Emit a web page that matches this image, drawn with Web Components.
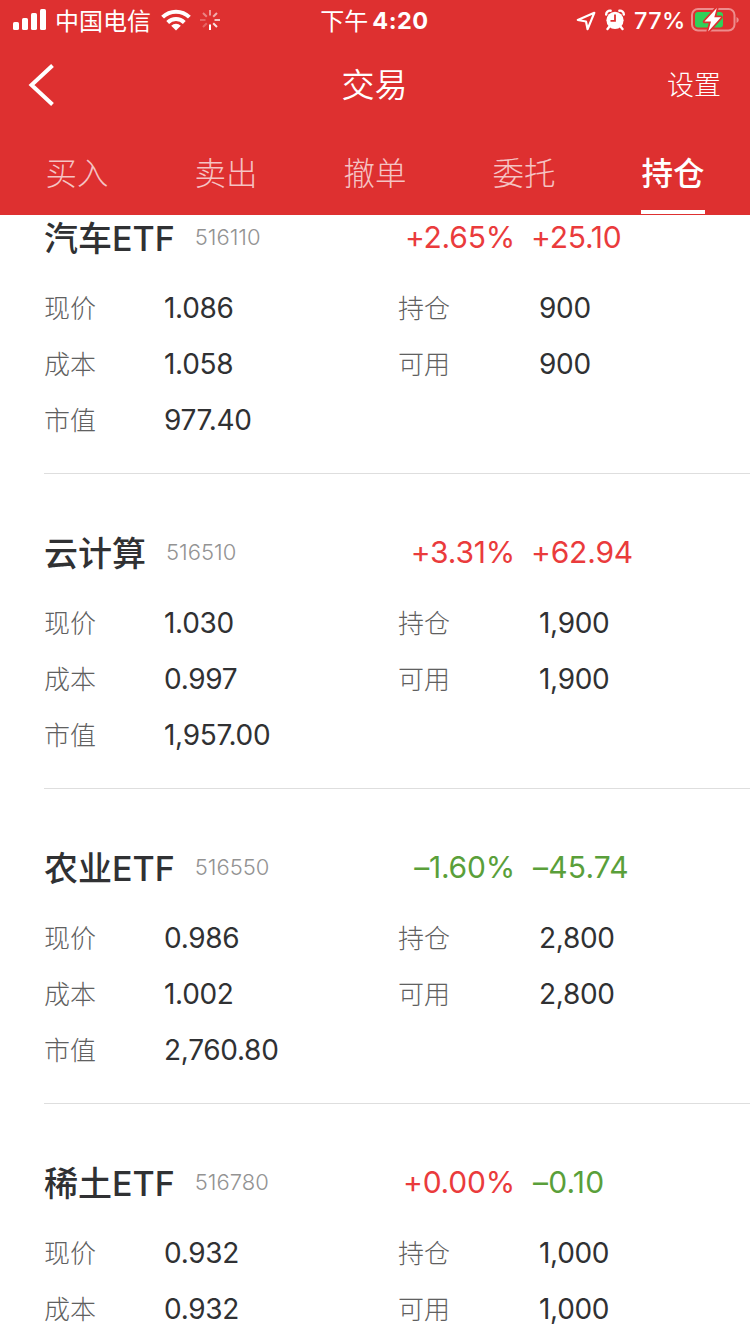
<!DOCTYPE html>
<html lang="zh-CN">
<head>
<meta charset="utf-8">
<title>交易</title>
<style>
  html, body {
    margin: 0;
    height: 100%;
  }
  body {
    background: #fff;
    overflow: hidden;
    font-family: Inter, "Noto Sans CJK SC", sans-serif;
    --color-brand: #de3030;
    --color-text: #303133;
    --color-label: #606060;
    --color-muted: #939393;
    --color-line: #dedede;
    --color-up: #ea3b3c;
    --color-down: #5a9f3a;
  }
</style>
</head>
<body>
<trade-page></trade-page>

<script>
class StatusBar extends HTMLElement {
  constructor() {
    super();
    const shadow = this.attachShadow({ mode: 'open' });
    shadow.innerHTML = `
      <style>
        :host {
          display: grid;
          grid-template-columns: 1fr auto 1fr;
          align-items: center;
          height: 40px;
          padding: 0 11px 0 13px;
          box-sizing: border-box;
          color: #fff;
          font-size: 24px;
          line-height: 42px;
          white-space: nowrap;
        }
        div {
          display: flex;
          align-items: center;
          height: 40px;
        }
        svg {
          display: block;
          flex: none;
        }
        .carrier {
          margin: 0 10px 0 8px;
          padding-top: 3px;
          font-weight: 400;
        }
        .wifi { margin-right: 8px; }
        .time {
          padding-right: 3px;
        }
        .time span { padding-top: 3px; }
        .time b {
          padding-top: 2px;
          font-size: 23.5px;
          font-weight: 700;
          letter-spacing: 0.5px;
          margin-left: 4px;
        }
        .right { justify-content: flex-end; }
        .alarm { margin: 0 9px; }
        .battery-text {
          padding-top: 2px;
          font-size: 23.5px;
          font-weight: 500;
          width: 57px;
          letter-spacing: 0.3px;
        }
      </style>
      <div>
        <svg width="34" height="40" viewBox="0 0 34 40" fill="#fff">
          <rect x="0" y="22" width="6" height="8" rx="1.6"/>
          <rect x="9" y="18" width="6" height="12" rx="1.6"/>
          <rect x="18" y="13" width="6" height="17" rx="1.6"/>
          <rect x="27" y="9" width="6" height="21" rx="1.6"/>
        </svg>
        <span class="carrier">中国电信</span>
        <svg class="wifi" width="30" height="40" viewBox="0 0 30 40">
          <g fill="none" stroke="#fff" stroke-width="4">
            <path d="M1.6 17.2a19 19 0 0 1 26.8 0"/>
            <path d="M6.7 22.5a11.8 11.8 0 0 1 16.6 0"/>
          </g>
          <path fill="#fff" d="M15 30.5l-4.8-4.8a6.800 6.800 0 0 1 9.600 0z"/>
        </svg>
        <svg width="22" height="40" viewBox="-11 -20 22 40" stroke="#fff" stroke-width="2">
          <path d="M0 4.500v5.500"/>
          <path d="M3.200 3.200l3.800 3.800" opacity=".85"/>
          <path d="M4.500 0h5.500" opacity=".7"/>
          <path d="M3.200-3.200l3.800-3.800" opacity=".6"/>
          <path d="M0-4.500v-5.500" opacity=".5"/>
          <path d="M-3.200-3.200l-3.800-3.800" opacity=".4"/>
          <path d="M-4.500 0h-5.500" opacity=".25"/>
          <path d="M-3.200 3.200l-3.800 3.800" opacity=".25"/>
        </svg>
      </div>
      <div class="time"><span>下午</span><b>4:20</b></div>
      <div class="right">
        <svg width="20" height="40" viewBox="0 0 20 40">
          <path d="M1.800 20L18.300 12.800 11.600 29.200 10 21.500z" fill="none" stroke="#fff" stroke-width="2.200" stroke-linejoin="round"/>
        </svg>
        <svg class="alarm" width="20" height="40" viewBox="0 0 20 40">
          <circle cx="10" cy="20.300" r="8.600" fill="#fff"/>
          <path d="M1.200 14.600a3.800 3.800 0 0 1 4.400-3.900M18.800 14.600a3.800 3.800 0 0 0-4.400-3.900M4.500 26.500L2.500 29M15.500 26.500l2 2.500" fill="none" stroke="#fff" stroke-width="2.400" stroke-linecap="round"/>
          <path d="M10 14.500v6.300H5.500" fill="none" stroke="#de3030" stroke-width="1.800"/>
        </svg>
        <span class="battery-text">77%</span>
        <svg width="48" height="40" viewBox="0 0 48 40">
          <rect x="1" y="9" width="42.500" height="21.500" rx="6" fill="none" stroke="#fff" stroke-opacity=".45" stroke-width="2"/>
          <path d="M45.500 17v6q2.300-.8 2.300-3t-2.300-3" fill="#fff" fill-opacity=".45"/>
          <rect x="4" y="12" width="28" height="15.500" rx="3" fill="#30d158"/>
          <path d="M25.800 8L13.500 21.600h6.500L17.200 31.400 30 17.300h-6.700z" fill="#fff" stroke="#de3030" stroke-width="3.500" paint-order="stroke" stroke-linejoin="round"/>
        </svg>
      </div>
    `;
  }
}
customElements.define('status-bar', StatusBar);

class NavBar extends HTMLElement {
  constructor() {
    super();
    const shadow = this.attachShadow({ mode: 'open' });
    shadow.innerHTML = `
      <style>
        :host {
          display: grid;
          grid-template-columns: 1fr auto 1fr;
          align-items: center;
          height: 88px;
          padding: 0 29px 0 28px;
          color: #fff;
          font-size: 33px;
          font-weight: 350;
          line-height: 48px;
        }
        svg { display: block; }
        .title { padding-top: 1px; }
        .action {
          justify-self: end;
          padding-top: 4px;
          font-size: 27px;
          font-weight: 300;
        }
      </style>
      <svg width="28" height="44" viewBox="0 0 28 44">
        <path d="M24.500 3.500L3.500 23 24.500 42.500" fill="none" stroke="#fff" stroke-width="4"/>
      </svg>
      <span class="title"><slot></slot></span>
      <span class="action"><slot name="action"></slot></span>
    `;
  }
}
customElements.define('nav-bar', NavBar);

class TradeTab extends HTMLElement {
  constructor() {
    super();
    const shadow = this.attachShadow({ mode: 'open' });
    shadow.innerHTML = `
      <style>
        :host {
          display: block;
          width: 64px;
          height: 86px;
          box-sizing: border-box;
          border-bottom: 4px solid transparent;
          font-size: 31.500px;
          font-weight: 300;
          line-height: 92px;
          text-align: center;
          white-space: nowrap;
          color: rgba(255, 255, 255, 0.72);
        }
        :host([active]) {
          font-weight: 500;
          color: #fff;
          border-bottom-color: #fff;
        }
      </style>
      <slot></slot>
    `;
  }
}
customElements.define('trade-tab', TradeTab);

class HoldingField extends HTMLElement {
  constructor() {
    super();
    const shadow = this.attachShadow({ mode: 'open' });
    shadow.innerHTML = `
      <style>
        :host {
          display: flex;
          height: 56px;
          line-height: 56px;
        }
        .label {
          width: var(--label-width, 120px);
          padding-top: 1px;
          font-size: 26px;
          font-weight: 300;
          color: var(--color-label);
        }
        .value {
          font-size: 28px;
          letter-spacing: -0.3px;
          color: var(--color-text);
        }
      </style>
      <span class="label"></span>
      <span class="value"><slot></slot></span>
    `;
    this._label = shadow.querySelector('.label');
  }

  connectedCallback() {
    this._label.textContent = this.getAttribute('label');
  }
}
customElements.define('holding-field', HoldingField);

class HoldingCard extends HTMLElement {
  constructor() {
    super();
    this.attachShadow({ mode: 'open' });
  }

  connectedCallback() {
    const get = (name) => this.getAttribute(name);
    const tone = (value) => (value.startsWith('+') ? 'up' : 'down');
    this.shadowRoot.innerHTML = `
      <style>
        :host {
          display: block;
          height: 315px;
          margin-left: 44px;
          padding-top: 43px;
          box-sizing: border-box;
          border-bottom: 1px solid var(--color-line);
        }
        .head {
          display: flex;
          height: 78px;
          line-height: 70px;
          white-space: nowrap;
        }
        .title {
          display: flex;
          gap: 20px;
          width: 350px;
        }
        .name {
          padding-top: 2px;
          font-size: 34px;
          font-weight: 500;
          color: var(--color-text);
        }
        .code {
          font-size: 22px;
          font-weight: 300;
          color: var(--color-muted);
        }
        .rate {
          width: 121px;
          text-align: right;
        }
        .amount { margin-left: 16px; }
        .rate, .amount {
          font-size: 30px;
          font-weight: 400;
          letter-spacing: -0.2px;
        }
        .up { color: var(--color-up); }
        .down { color: var(--color-down); }
        .amount.down {
          margin-left: 18px;
          letter-spacing: 0.2px;
        }
        .fields {
          display: grid;
          grid-template-columns: 354px 1fr;
        }
        .right { --label-width: 141px; }
      </style>
      <div class="head">
        <div class="title">
          <span class="name">${get('name')}</span>
          <span class="code">${get('code')}</span>
        </div>
        <span class="rate ${tone(get('rate'))}">${get('rate')}</span>
        <span class="amount ${tone(get('amount'))}">${get('amount')}</span>
      </div>
      <div class="fields">
        <holding-field label="现价">${get('price')}</holding-field>
        <holding-field class="right" label="持仓">${get('position')}</holding-field>
        <holding-field label="成本">${get('cost')}</holding-field>
        <holding-field class="right" label="可用">${get('position')}</holding-field>
        ${this.hasAttribute('value') ? `<holding-field label="市值">${get('value')}</holding-field>` : ''}
      </div>
    `;
  }
}
customElements.define('holding-card', HoldingCard);

class TradePage extends HTMLElement {
  constructor() {
    super();
    const shadow = this.attachShadow({ mode: 'open' });
    shadow.innerHTML = `
      <style>
        :host {
          display: flex;
          flex-direction: column;
          width: 750px;
          height: 1334px;
          overflow: hidden;
        }
        header {
          flex: none;
          height: 215px;
          background: var(--color-brand);
        }
        nav {
          display: flex;
          justify-content: space-between;
          padding: 0 45px;
        }
        main {
          flex: 1;
          min-height: 0;
          overflow: hidden;
        }
        /* the list is scrolled a little under the header */
        .list { margin-top: -56px; }
      </style>
      <header>
        <status-bar></status-bar>
        <nav-bar>交易<span slot="action">设置</span></nav-bar>
        <nav>
          <trade-tab>买入</trade-tab>
          <trade-tab>卖出</trade-tab>
          <trade-tab>撤单</trade-tab>
          <trade-tab>委托</trade-tab>
          <trade-tab active>持仓</trade-tab>
        </nav>
      </header>
      <main>
        <div class="list">
          <holding-card name="汽车ETF" code="516110" rate="+2.65%" amount="+25.10" price="1.086" cost="1.058" value="977.40" position="900"></holding-card>
          <holding-card name="云计算" code="516510" rate="+3.31%" amount="+62.94" price="1.030" cost="0.997" value="1,957.00" position="1,900"></holding-card>
          <holding-card name="农业ETF" code="516550" rate="–1.60%" amount="–45.74" price="0.986" cost="1.002" value="2,760.80" position="2,800"></holding-card>
          <holding-card name="稀土ETF" code="516780" rate="+0.00%" amount="–0.10" price="0.932" cost="0.932" position="1,000"></holding-card>
        </div>
      </main>
    `;
  }
}
customElements.define('trade-page', TradePage);
</script>
</body>
</html>
